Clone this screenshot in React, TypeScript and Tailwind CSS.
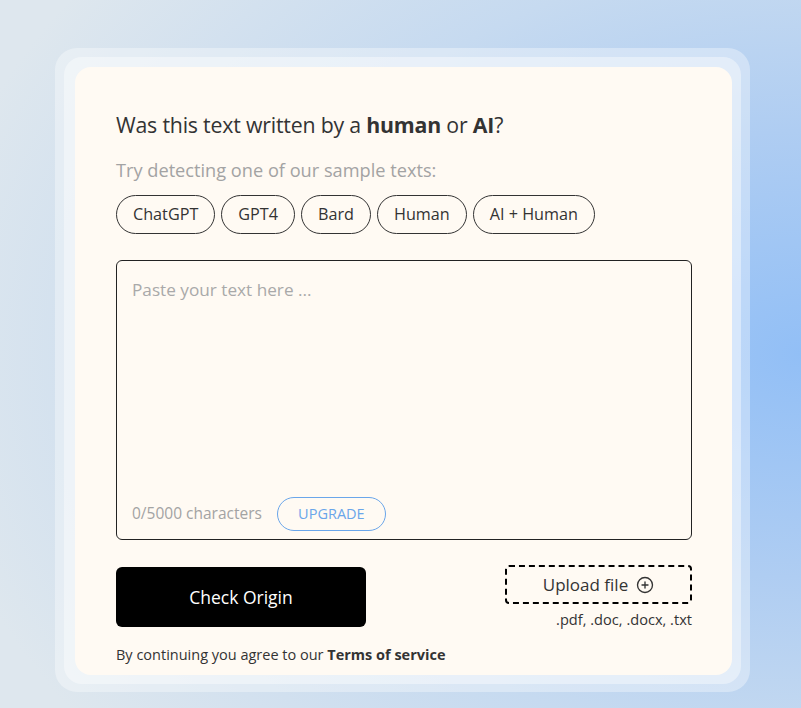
import { CirclePlus } from "lucide-react";

const samples = ["ChatGPT", "GPT4", "Bard", "Human", "AI + Human"];

export default function App() {
  return (
    <main
      className="min-h-[708px] w-full pt-[48px] pl-[55px] bg-[radial-gradient(ellipse_110%_90%_at_100%_50%,#92bff6_0%,#afcdf2_35%,#c6daf0_62%,#dee7ee_100%)]"
      style={{ fontFamily: '"Open Sans", "Noto Sans", sans-serif' }}
    >
      {/* frame */}
      <div className="w-[695px] h-[644px] rounded-[22px] bg-white/35 p-[9px] pb-[8px]">
        <div className="h-full rounded-[18px] bg-white/40 pt-[10px] pl-[11px] pr-[9px] pb-[9px]">
          <div className="h-full rounded-[16px] bg-[#fffaf3] pl-[41px] pr-[40px] pt-[44px] text-[#333]">
            <h1 className="text-[21.3px] leading-[28px] tracking-[-0.2px] text-[#333]">
              Was this text written by a <b className="font-bold">human</b> or <b className="font-bold">AI</b>?
            </h1>
            <p className="mt-[19px] text-[18.2px] leading-[24px] text-[#a3a3a3]">
              Try detecting one of our sample texts:
            </p>
            <div className="mt-[13px] flex gap-[6px]">
              {samples.map((s) => (
                <button
                  key={s}
                  className="h-[39px] px-[16px] rounded-full border border-[#333] text-[16.2px] text-[#333]"
                >
                  {s}
                </button>
              ))}
            </div>

            {/* text area */}
            <div className="mt-[26px] h-[280px] rounded-[6px] border border-[#222] flex flex-col justify-between pl-[15px] pr-[16px] pt-[16px] pb-[8px]">
              <span className="text-[17.2px] text-[#a9a9a9]">Paste your text here ...</span>
              <div className="flex items-center gap-[15px]">
                <span className="text-[15.5px] text-[#a3a3a3]">0/5000 characters</span>
                <span className="h-[34px] w-[109px] rounded-full border border-[#6aa6ea] text-[#6aa6ea] text-[14.5px] flex items-center justify-center">
                  UPGRADE
                </span>
              </div>
            </div>

            <div className="mt-[27px] flex justify-between">
              <button className="w-[250px] h-[60px] rounded-[6px] bg-black text-white text-[17.5px]">
                Check Origin
              </button>
              <div className="flex flex-col items-end">
                <button className="mt-[-2px] w-[187px] h-[39px] rounded-[4px] border-2 border-dashed border-black flex items-center justify-center gap-[8px] text-[17px] text-[#333]">
                  Upload file
                  <CirclePlus size={18} strokeWidth={1.8} />
                </button>
                <span className="mt-[5px] text-[14.6px] text-[#333]">.pdf, .doc, .docx, .txt</span>
              </div>
            </div>

            <p className="mt-[13px] text-[14.5px] text-[#333]">
              By continuing you agree to our <b className="font-bold">Terms of service</b>
            </p>
          </div>
        </div>
      </div>
    </main>
  );
}
